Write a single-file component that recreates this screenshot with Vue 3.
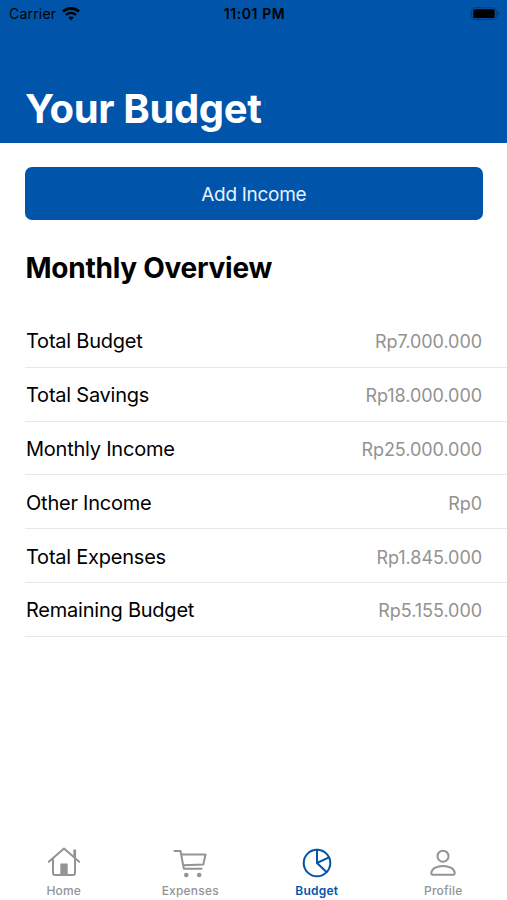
<script setup>
const rows = [
  { label: 'Total Budget', value: 'Rp7.000.000' },
  { label: 'Total Savings', value: 'Rp18.000.000' },
  { label: 'Monthly Income', value: 'Rp25.000.000' },
  { label: 'Other Income', value: 'Rp0' },
  { label: 'Total Expenses', value: 'Rp1.845.000' },
  { label: 'Remaining Budget', value: 'Rp5.155.000' },
]
const tabs = [
  { id: 'home', label: 'Home' },
  { id: 'expenses', label: 'Expenses' },
  { id: 'budget', label: 'Budget' },
  { id: 'profile', label: 'Profile' },
]
const active = 'budget'
</script>

<template>
  <div class="screen">
    <header class="header">
      <div class="status">
        <div class="carrier">
          <span>Carrier</span>
          <svg width="18" height="14" viewBox="0 0 18 14" fill="none" stroke="#000" stroke-width="2.6">
            <path d="M1 4.500C5.600.3 12.400.3 17 4.500" />
            <path d="M4 7.900c2.900-2.600 7.100-2.600 10 0" />
            <path d="M6.200 10.500c1.700-1.500 3.900-1.500 5.600 0L9 13.400z" fill="#000" stroke="none" />
          </svg>
        </div>
        <span class="time">11:01 PM</span>
        <svg class="battery" width="30" height="14" viewBox="0 0 30 14">
          <rect x="1.500" y=".7" width="25" height="11.800" rx="4" fill="none" stroke="#003f80" stroke-width="1.300" />
          <rect x="3.200" y="2.300" width="21.500" height="8.700" rx="1.500" fill="#000" />
          <path d="M27.700 4.600v4q1.800-.6 1.800-2t-1.800-2z" fill="#003f80" />
        </svg>
      </div>
      <h1>Your Budget</h1>
    </header>

    <main class="content">
      <button class="add">Add Income</button>
      <h2>Monthly Overview</h2>
      <ul class="list">
        <li v-for="row in rows" :key="row.label">
          <span class="label">{{ row.label }}</span>
          <span class="value">{{ row.value }}</span>
        </li>
      </ul>
    </main>

    <nav class="tabs">
      <a v-for="tab in tabs" :key="tab.id" class="tab" :class="{ active: tab.id === active }">
        <svg width="36" height="34" viewBox="0 0 36 34" fill="none" stroke="currentColor" stroke-width="2" stroke-linecap="round" stroke-linejoin="round">
          <g v-if="tab.id === 'home'">
            <path d="M2.800 16.800 18 3.500l15.200 13.300M7 13.500V28q0 2 2 2h18q2 0 2-2V13.500" />
            <path d="M28.700 4.500v8" stroke-width="2.800" stroke-linecap="butt" />
            <path d="M14.300 18.500h7.400V30h-7.400z" fill="currentColor" stroke="none" />
          </g>
          <g v-else-if="tab.id === 'expenses'">
            <path d="M2.500 6h6l3.300 17.800h17.800M9.200 9.500H33.500l-2.200 10-20.300.8" />
            <circle cx="14.300" cy="30" r="2.300" fill="currentColor" stroke="none" />
            <circle cx="27.200" cy="30" r="2.300" fill="currentColor" stroke="none" />
          </g>
          <g v-else-if="tab.id === 'budget'">
            <circle cx="18" cy="18" r="13.300" />
            <path d="M18 4.800V18l9.500 9M18 18l12-5.600" />
          </g>
          <g v-else>
            <circle cx="18" cy="11.200" r="5.500" />
            <path d="M8.400 29.800h19.200q2.300 0 2.100-2.200c-.7-4.200-5.900-6.600-11.700-6.600s-11 2.400-11.700 6.600q-.2 2.200 2.100 2.200z" />
          </g>
        </svg>
        <span>{{ tab.label }}</span>
      </a>
    </nav>
  </div>
</template>

<style>
body {
  background: #fff;
}
</style>

<style scoped>
.screen {
  display: flex;
  flex-direction: column;
  width: 507px;
  height: 900px;
  overflow: hidden;
  background: #fff;
  color: #000;
  font-family: Inter, sans-serif;
}
.header {
  display: flex;
  flex-direction: column;
  justify-content: space-between;
  box-sizing: border-box;
  height: 142.500px;
  padding-bottom: 9.500px;
  background: #0055ab;
}
.status {
  display: grid;
  grid-template-columns: 1fr auto 1fr;
  align-items: center;
  height: 27px;
  padding: 0 7px 0 9px;
  font-size: 14px;
}
.carrier {
  display: flex;
  align-items: center;
  gap: 6px;
  letter-spacing: 0.2px;
}
.time {
  font-weight: 600;
  letter-spacing: 0.600px;
}
.battery {
  justify-self: end;
}
h1 {
  margin: 0;
  padding-left: 25px;
  color: #fff;
  font-size: 40px;
  font-weight: 700;
  line-height: 48px;
  letter-spacing: -0.350px;
}
.content {
  display: flex;
  flex: 1;
  flex-direction: column;
  padding: 24.500px 0 0 25px;
}
.add {
  width: 457.500px;
  height: 53px;
  padding: 1px 0 0;
  border: 0;
  border-radius: 7px;
  background: #0055ab;
  color: #e6f1ff;
  font: 400 19px Inter, sans-serif;
  letter-spacing: -0.300px;
}
h2 {
  margin: 27.500px 0 0;
  padding-left: 0.500px;
  font-size: 28px;
  font-weight: 700;
  line-height: 40px;
  letter-spacing: -0.260px;
}
.list {
  margin: 26.500px 0 0;
  padding: 0;
  list-style: none;
}
li {
  display: flex;
  align-items: center;
  justify-content: space-between;
  box-sizing: border-box;
  height: 53.800px;
  padding: 2px 25px 0 1px;
  border-bottom: 1px solid #e8e8e8;
}
.label {
  font-size: 20px;
  letter-spacing: -0.230px;
}
.value {
  padding-top: 1px;
  color: #929292;
  font-size: 18px;
  letter-spacing: -0.050px;
}
.tabs {
  display: grid;
  grid-template-columns: repeat(4, 126.500px);
  justify-content: center;
  height: 55px;
}
.tab {
  display: flex;
  flex-direction: column;
  align-items: center;
  gap: 4px;
  color: #949494;
  font-size: 12px;
  font-weight: 500;
  line-height: 15px;
  letter-spacing: 0.200px;
}
.active {
  color: #0055ab;
  font-weight: 600;
}
</style>
